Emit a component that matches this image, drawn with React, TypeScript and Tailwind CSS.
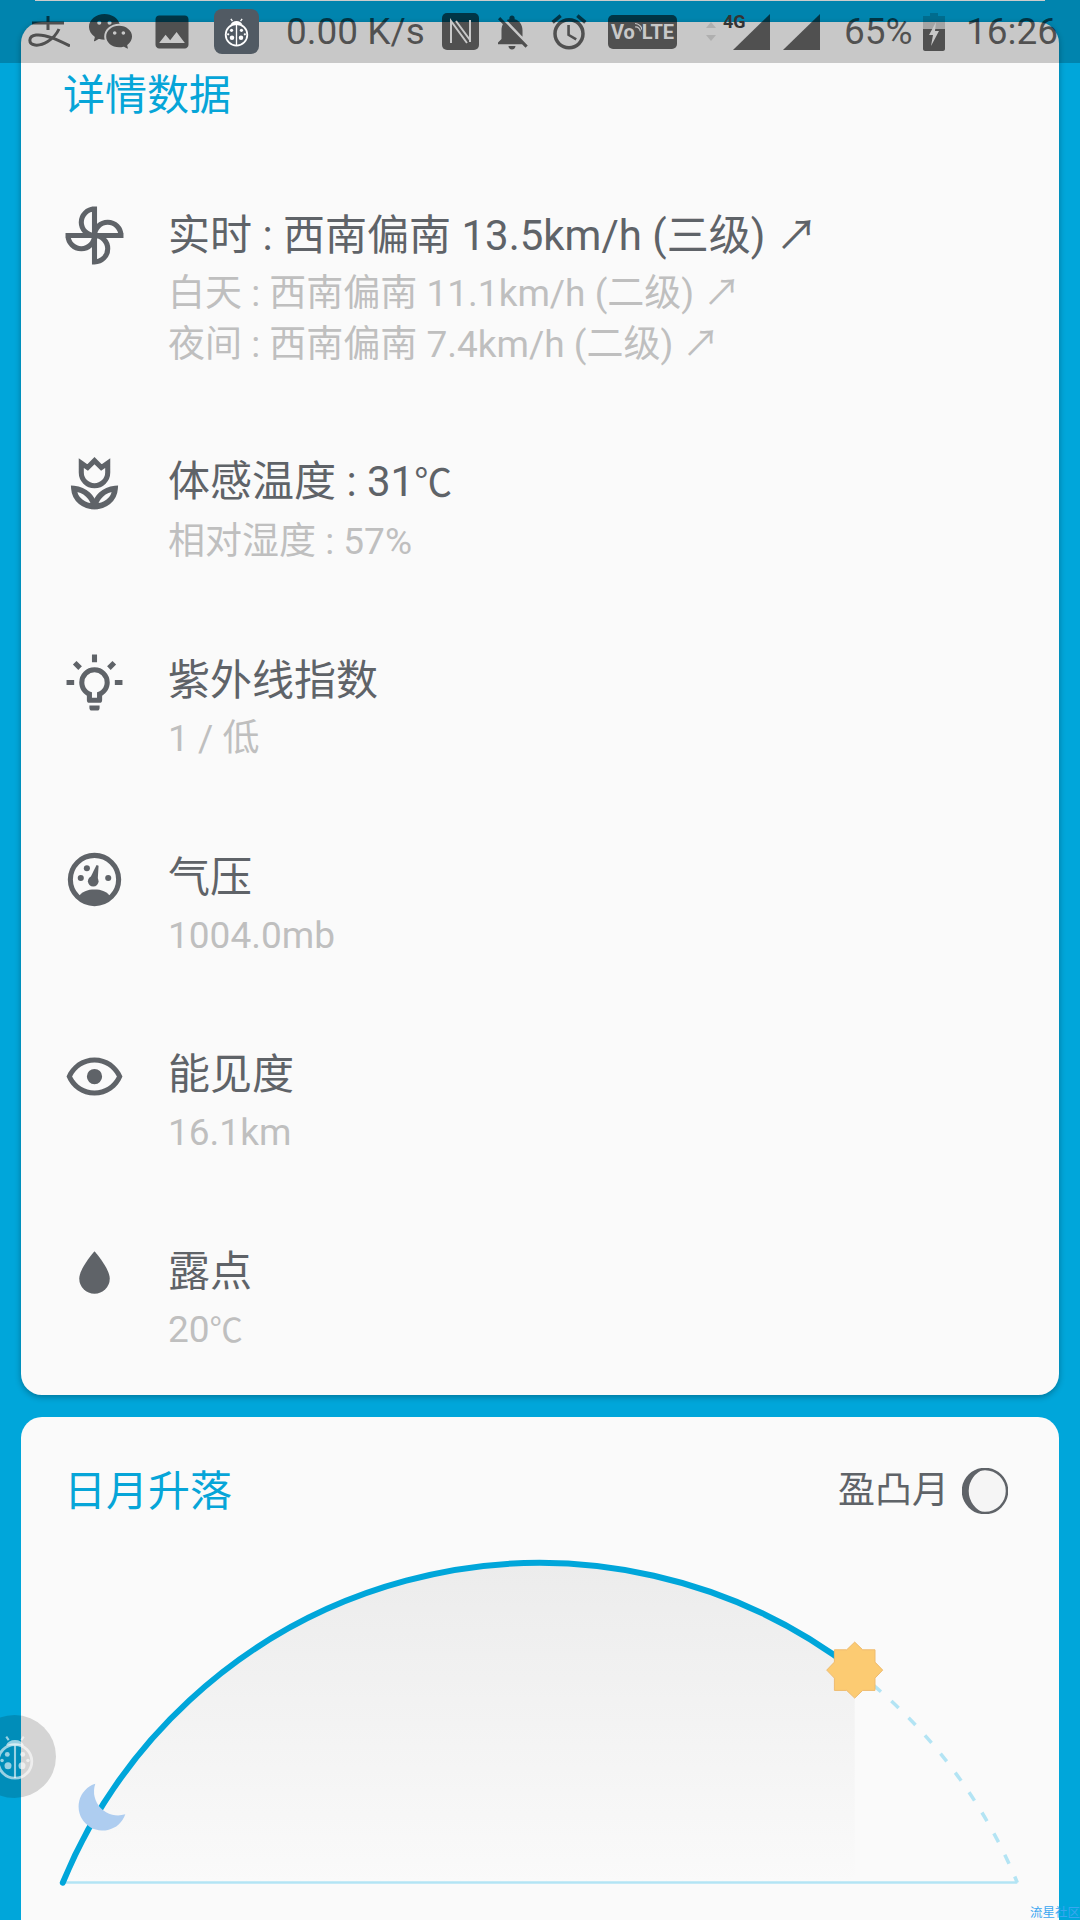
import { RiWechatFill } from 'react-icons/ri';
import { MdImage, MdNotificationsOff, MdAccessAlarm } from 'react-icons/md';

const rows = [
  { icon: 'fan', main: '实时 : 西南偏南 13.5km/h (三级) ↗', subs: ['白天 : 西南偏南 11.1km/h (二级) ↗', '夜间 : 西南偏南 7.4km/h (二级) ↗'] },
  { icon: 'tulip', main: '体感温度 : 31℃', subs: ['相对湿度 : 57%'] },
  { icon: 'bulb', main: '紫外线指数', subs: ['1 / 低'] },
  { icon: 'gauge', main: '气压', subs: ['1004.0mb'] },
  { icon: 'eye', main: '能见度', subs: ['16.1km'] },
  { icon: 'drop', main: '露点', subs: ['20℃'] },
];

// the degree glyph runs narrower in the original than in our fallback font
function Degrees({ text }: { text: string }) {
  if (!text.endsWith('℃')) return <>{text}</>;
  return (
    <>
      {text.slice(0, -1)}
      <span className="text-[0.9em]">℃</span>
    </>
  );
}

function DetailIcon({ name }: { name: string }) {
  return (
    <svg viewBox="0 0 24 24" className="w-[61px] h-[61px] shrink-0 text-[#5f6368]" fill="currentColor">
      {name === 'fan' && (
        <g fill="none" stroke="currentColor" strokeWidth="2">
          {[0, 90, 180, 270].map((r) => (
            <path key={r} transform={`rotate(${r} 12 12)`} d="M12 12.9V.6M12 1.6A5.2 5.2 0 0 0 12 12" />
          ))}
        </g>
      )}
      {name === 'tulip' && (
        <g fill="none" stroke="currentColor">
          <path strokeWidth="2" d="M6.8 4L9.3 5.7L12 3L14.7 5.7L17.2 4V7.7A5.2 5.2 0 0 1 6.8 7.7Z" />
          <path strokeWidth="2.2" d="M3.9 14C8.5 14.5 11.3 17.5 12 21C8 21 4.2 18.5 3.9 14Z" />
          <path strokeWidth="2.2" d="M20.1 14C15.5 14.5 12.7 17.5 12 21C16 21 19.8 18.5 20.1 14Z" />
        </g>
      )}
      {name === 'bulb' && (
        <path d="M20,11H23V13H20V11M1,11H4V13H1V11M13,1V4H11V1H13M4.92,3.5L7.05,5.64L5.63,7.05L3.5,4.93L4.92,3.5M16.95,5.63L19.07,3.5L20.5,4.93L18.36,7.05L16.95,5.63M12,6A6,6 0 0,1 18,12C18,14.22 16.79,16.16 15,17.2V19A1,1 0 0,1 14,20H10A1,1 0 0,1 9,19V17.2C7.21,16.16 6,14.22 6,12A6,6 0 0,1 12,6M14,21V22A1,1 0 0,1 13,23H11A1,1 0 0,1 10,22V21H14M11,18H13V15.87C14.73,15.43 16,13.86 16,12A4,4 0 0,0 12,8A4,4 0 0,0 8,12C8,13.86 9.27,15.43 11,15.87V18Z" />
      )}
      {name === 'gauge' && (
        <g>
          <circle cx="12" cy="12" r="9.5" fill="none" stroke="currentColor" strokeWidth="2" />
          <path d="M5.6 19C7 16.6 9.3 15.9 12 15.9C14.7 15.9 17 16.6 18.4 19C16.8 20.6 14.5 21.5 12 21.5C9.5 21.5 7.2 20.6 5.6 19Z" />
          <circle cx="6.6" cy="11.4" r="1.2" />
          <circle cx="17.4" cy="11.4" r="1.2" />
          <circle cx="9" cy="7.6" r="1.2" />
          <circle cx="11.5" cy="12.7" r="2.1" />
          <path d="M10 12L12.8 6.3L13.6 6.6L13.2 13Z" />
        </g>
      )}
      {name === 'eye' && (
        <path d="M12,9A3,3 0 0,1 15,12A3,3 0 0,1 12,15A3,3 0 0,1 9,12A3,3 0 0,1 12,9M12,4.5C17,4.5 21.27,7.61 23,12C21.27,16.39 17,19.5 12,19.5C7,19.5 2.73,16.39 1,12C2.73,7.61 7,4.5 12,4.5M3.18,12C4.83,15.36 8.24,17.5 12,17.5C15.76,17.5 19.17,15.36 20.82,12C19.17,8.64 15.76,6.5 12,6.5C8.24,6.5 4.83,8.64 3.18,12Z" />
      )}
      {name === 'drop' && <path d="M12,20A6,6 0 0,1 6,14C6,10 12,3.25 12,3.25C12,3.25 18,10 18,14A6,6 0 0,1 12,20Z" />}
    </svg>
  );
}

function Ladybug({ className }: { className: string }) {
  return (
    <svg viewBox="0 0 24 26" className={className} fill="currentColor">
      <path d="M6.8 6.4A5.6 5 0 0 1 17.2 6.4Z" />
      <path d="M8.4 3.4L7 1.4M15.6 3.4L17 1.4" stroke="currentColor" strokeWidth="1.2" fill="none" />
      <circle cx="12" cy="15.5" r="9.6" fill="none" stroke="currentColor" strokeWidth="1.6" />
      <path d="M12 6.5V25" stroke="currentColor" strokeWidth="1.2" fill="none" />
      <circle cx="7.6" cy="11.5" r="1.4" />
      <circle cx="16.4" cy="11.5" r="1.4" />
      <circle cx="8" cy="18" r="2" />
      <circle cx="16" cy="18" r="2" />
      <circle cx="4.6" cy="15" r="1" />
      <circle cx="19.4" cy="15" r="1" />
    </svg>
  );
}

function StatusBar() {
  return (
    <div className="absolute top-0 left-0 w-full h-[63px] bg-black/20 flex items-center text-black/60 text-[37px] leading-none">
      <svg viewBox="0 0 42 31" className="ml-[28px] w-[42px] h-[31px]" fill="none" stroke="currentColor" strokeWidth="3">
        <path d="M20 0V14M4 7H36M31 13C26 24 14 30 7 29C0 28 0 20 8 19C18 18 30 24 42 30" />
      </svg>
      <RiWechatFill className="ml-[17px] w-[47px] h-[47px]" />
      <MdImage className="ml-[16px] w-[44px] h-[44px]" />
      <div className="ml-[20px] w-[45px] h-[45px] rounded-[8px] bg-[#515a63] text-white flex items-center justify-center">
        <Ladybug className="w-[27px] h-[30px]" />
      </div>
      <span className="ml-[27px] w-[139px] [font-family:Roboto,sans-serif]">0.00 K/s</span>
      <svg viewBox="0 0 37 37" className="ml-[17px] w-[37px] h-[37px]">
        <rect width="37" height="37" rx="5" fill="currentColor" />
        <path d="M9 30V8L25 30M28 7V29M14 8L28 27" fill="none" stroke="#c8c8c8" strokeWidth="2" />
      </svg>
      <MdNotificationsOff className="ml-[12px] w-[42px] h-[42px]" />
      <MdAccessAlarm className="ml-[15px] w-[42px] h-[42px]" />
      <div className="ml-[18px] w-[69px] h-[34px] rounded-[5px] bg-black/60 text-[#c8c8c8] text-[20px] font-bold flex items-center justify-center [font-family:Roboto,sans-serif]">
        <span>Vo</span>
        <svg viewBox="0 0 8 12" className="w-[7px] h-[12px] -mt-[10px]" fill="none" stroke="currentColor" strokeWidth="1.4">
          <path d="M0 6A5 5 0 0 1 6 11M0 2A9 9 0 0 1 8 9" />
        </svg>
        <span>LTE</span>
      </div>
      <svg viewBox="0 0 10 19" className="ml-[29px] w-[10px] h-[19px] opacity-20" fill="currentColor">
        <path d="M5 0L10 6H0ZM0 13H10L5 19Z" />
      </svg>
      <div className="relative ml-[17px] w-[37px] h-[37px] self-start mt-[14px]">
        <svg viewBox="0 0 37 36" className="w-[37px] h-[36px]" fill="currentColor">
          <path d="M37 0V36H0Z" />
        </svg>
        <span className="absolute top-0 -left-[10px] text-[18px] font-bold leading-[16px] text-[#333] [font-family:Roboto,sans-serif]">4G</span>
      </div>
      <svg viewBox="0 0 37 36" className="ml-[13px] w-[37px] h-[36px] self-start mt-[14px]" fill="currentColor">
        <path d="M37 0V36H0Z" />
      </svg>
      <span className="ml-[24px] w-[68px] [font-family:Roboto,sans-serif]">65%</span>
      <svg viewBox="0 0 22 38" className="ml-[11px] w-[22px] h-[38px]">
        <path d="M7 0H15V3H22V16H0V3H7Z" fill="currentColor" opacity="0.3" />
        <path d="M0 16H22V36C22 37 21 38 20 38H2C1 38 0 37 0 36Z" fill="currentColor" />
        <path d="M13 9L6 22H10L8 33L16 18H12Z" fill="#c8c8c8" />
      </svg>
      <span className="ml-[21px] [font-family:Roboto,sans-serif]">16:26</span>
    </div>
  );
}

function SunMoonChart() {
  return (
    <svg viewBox="0 0 1038 380" className="block w-full h-[380px]">
      <defs>
        <linearGradient id="dayFill" x1="0" y1="0" x2="0" y2="1">
          <stop offset="0" stopColor="#ececec" />
          <stop offset="1" stopColor="#fafafa" />
        </linearGradient>
      </defs>
      <path d="M41.8 351.7A516 516 0 0 1 833.7 139.1V351.7Z" fill="url(#dayFill)" />
      <path d="M42 351.5H996.3" fill="none" stroke="#b3e4f4" strokeWidth="2.5" />
      <path d="M833.7 139.1A516 516 0 0 1 996.3 351.7" fill="none" stroke="#b3e4f4" strokeWidth="3.5" strokeDasharray="10 14" />
      <path d="M41.8 351.7A516 516 0 0 1 833.7 139.1" fill="none" stroke="#00a6da" strokeWidth="6" strokeLinecap="round" />
      <path d="M74.3 252.7A24 24 0 1 0 104.3 283.3A24 24 0 0 1 74.3 252.7Z" fill="#aecdf0" />
      <polygon
        points="833.7,111.1 841.7,118.8 854,118.8 854,131.1 861.7,139.1 854,147.1 854,159.4 841.7,159.4 833.7,167.1 825.7,159.4 813.4,159.4 813.4,147.1 805.7,139.1 813.4,131.1 813.4,118.8 825.7,118.8"
        fill="#fccb72"
        stroke="#eebb6f"
        strokeWidth="1"
      />
    </svg>
  );
}

export default function App() {
  return (
    <div className="relative w-[1080px] h-[1920px] overflow-hidden bg-[#00a6da] [font-family:Roboto,'Noto_Sans_CJK_SC',sans-serif]">
      <div className="mx-[35px] h-px bg-white" />
      <div className="mt-[21px] mx-[21px] rounded-[21px] bg-[#fafafa] shadow-[0_2px_6px_rgba(0,0,0,0.3)] pt-[46px] pb-[39px]">
        <div className="pl-[42px] text-[42px] leading-[56px] text-[#06a5d8]">详情数据</div>
        <div className="mt-[82px] flex flex-col gap-[86px]">
          {rows.map((row, i) => (
            <div key={row.icon} className="flex pl-[43px]">
              <div className="h-[59px] flex items-center">
                <DetailIcon name={row.icon} />
              </div>
              <div className={i === 0 ? 'ml-[43px] -mb-[2px]' : 'ml-[43px] -mt-[2px]'}>
                <div className="text-[42px] leading-[59px] text-[#5f6368]">
                  <Degrees text={row.main} />
                </div>
                <div className="pt-[3px]">
                  {row.subs.map((sub) => (
                    <div key={sub} className="text-[37px] leading-[51px] text-[#bfbfbf]">
                      <Degrees text={sub} />
                    </div>
                  ))}
                </div>
              </div>
            </div>
          ))}
        </div>
      </div>
      <div className="mt-[22px] mx-[21px] h-[600px] rounded-t-[21px] bg-[#fafafa] pt-[46px]">
        <div className="flex items-center justify-between pl-[43px] pr-[51px] h-[56px]">
          <span className="text-[42px] text-[#06a5d8]">日月升落</span>
          <div className="flex items-center gap-[13px]">
            <span className="text-[37px] text-[#5f6368]">盈凸月</span>
            <svg viewBox="0 0 46 46" className="w-[46px] h-[46px]">
              <circle cx="23" cy="23" r="22" fill="#f5f5f5" stroke="#5f6368" strokeWidth="2.5" />
              <path d="M23 1A22 22 0 0 0 23 45A23 23 0 0 1 23 1Z" fill="#5f6368" />
            </svg>
          </div>
        </div>
        <div className="mt-[12px]">
          <SunMoonChart />
        </div>
      </div>
      <StatusBar />
      <div className="absolute left-[-27px] top-[1715px] w-[83px] h-[83px] rounded-full bg-black/15 flex items-center justify-center text-white/60">
        <Ladybug className="w-[42px] h-[46px]" />
      </div>
      <div className="absolute right-0 bottom-0 w-[50px] text-[12.5px] leading-[14px] whitespace-nowrap text-[#3aa6f0]">流星社区</div>
    </div>
  );
}
